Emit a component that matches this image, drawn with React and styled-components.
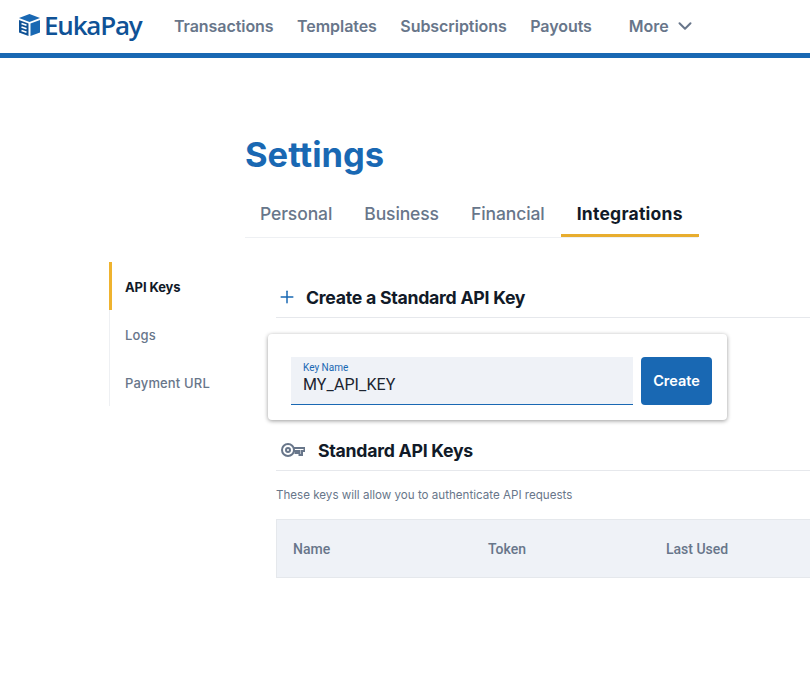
import React from "react";
import styled, { createGlobalStyle } from "styled-components";
import { ChevronDown, Plus } from "lucide-react";

const Global = createGlobalStyle`
  html, body { margin: 0; padding: 0; background: #fff; overflow: hidden; }
  body { font-family: Inter, "Liberation Sans", sans-serif; }
`;

const Header = styled.header`
  height: 53px;
  border-bottom: 5px solid #1968b3;
  display: flex;
  align-items: center;
  padding-left: 19px;
  background: #fff;
`;
const Logo = styled.div`
  display: flex;
  align-items: center;
  gap: 4px;
  width: 155px;
  padding-bottom: 4px;
  color: #0f5296;
`;
const LogoText = styled.span`
  font: 600 26px/1 "Open Sans", sans-serif;
  letter-spacing: -1.2px;
`;
const Nav = styled.nav`
  display: flex;
  align-items: center;
  gap: 23.5px;
  padding-bottom: 2px;
`;
const NavLink = styled.a`
  font-size: 16px;
  font-weight: 600;
  letter-spacing: -0.06px;
  color: #68768a;
  display: flex;
  align-items: center;
  margin-left: ${p => (p.$more ? "13.5px" : "0")};
  gap: 5px;
`;
const Body = styled.div`
  display: flex;
  padding-left: 109px;
`;
const Sidebar = styled.aside`
  width: 135px;
  flex: none;
  margin-top: 204px;
  align-self: flex-start;
  border-left: 1px solid #eef0f3;
`;
const SideItem = styled.div`
  height: 48px;
  box-sizing: border-box;
  display: flex;
  align-items: center;
  padding: 2px 0 0 13px;
  margin-left: -1px;
  border-left: 3px solid ${p => (p.$active ? "#efb32f" : "transparent")};
  font-size: 13px;
  font-weight: ${p => (p.$active ? 700 : 500)};
  letter-spacing: ${p => (p.$active ? "-0.1px" : "0.15px")};
  color: ${p => (p.$active ? "#111a28" : "#68768a")};
`;
const Content = styled.main`
  flex: 1;
  min-width: 0;
`;
const Title = styled.h1`
  margin: 75px 0 0;
  font-size: 34.5px;
  line-height: 44px;
  font-weight: 700;
  color: #1968b3;
`;
const Tabs = styled.div`
  display: flex;
  margin-top: 17px;
  border-bottom: 1px solid #eef0f3;
  width: 453px;
  height: 43px;
`;
const Tab = styled.div`
  padding: 0 16px;
  box-sizing: content-box;
  line-height: 40px;
  font-size: 17.5px;
  font-weight: ${p => (p.$active ? 700 : 500)};
  letter-spacing: ${p => (p.$active ? "0.25px" : "-0.1px")};
  color: ${p => (p.$active ? "#111a28" : "#68768a")};
  border-bottom: ${p => (p.$active ? "3px solid #e8ad2e" : "none")};
  height: ${p => (p.$active ? "40px" : "43px")};
  margin-bottom: -1px;
  &:first-child { margin-left: -1px; }
`;
const Panel = styled.section`
  margin: 39px 0 0 31px;
`;
const SectionHead = styled.div`
  height: 41px;
  box-sizing: border-box;
  display: flex;
  align-items: center;
  padding-left: ${p => p.$inset}px;
  border-bottom: 1px solid #e6e8ec;
  gap: ${p => p.$gap}px;
`;
const SectionTitle = styled.h2`
  margin: 0;
  font-size: 17.7px;
  font-weight: 700;
  letter-spacing: -0.27px;
  color: #111a28;
`;
const Card = styled.div`
  margin: 16px 0 0 -8px;
  width: 459px;
  height: 86px;
  box-sizing: border-box;
  background: #fff;
  border-radius: 4px;
  box-shadow: 0 1px 4px rgba(0,0,0,.4);
  padding: 23px 15px 0 23px;
  display: flex;
  gap: 8px;
`;
const Field = styled.div`
  width: 342px;
  height: 48px;
  box-sizing: border-box;
  background: #eff2f7;
  border-bottom: 1px solid #1968b3;
  padding: 5px 12px 0;
  font-family: Roboto, sans-serif;
`;
const FieldLabel = styled.div`
  font-size: 10px;
  line-height: 11px;
  color: #1968b3;
`;
const FieldValue = styled.div`
  font-size: 16px;
  line-height: 22px;
  margin-top: 1px;
  letter-spacing: 0.1px;
  color: #1b2430;
`;
const Button = styled.button`
  width: 71px;
  height: 48px;
  border: 0;
  border-radius: 4px;
  background: #1968b3;
  color: #fff;
  font: 600 14.5px Inter, sans-serif;
  padding: 0 0 1px;
`;
const Section2 = styled.div`
  margin-top: 10px;
`;
const Description = styled.p`
  margin: 17px 0 0;
  font-size: 11.6px;
  line-height: 14px;
  color: #68768a;
`;
const TableHead = styled.div`
  margin-top: 17px;
  height: 59px;
  box-sizing: border-box;
  display: grid;
  grid-template-columns: 195px 178px 1fr;
  align-items: center;
  padding-left: 16px;
  background: #eff2f7;
  border: 1px solid #e5e8ec;
  border-right: 0;
`;
const HeadCell = styled.div`
  font: 500 14px Roboto, sans-serif;
  color: #68768a;
`;

const CubeIcon = () => (
  <svg width="21" height="22" viewBox="0 0 21 22" fill="none">
    <path d="M10.5 0 21 4 10.5 8 0 4z" fill="#1968b3" />
    <path d="M0 6l9.5 3.5V22L0 18.5z" fill="#0f5296" />
    <path d="M11.5 9.5 21 6v12.5L11.5 22z" fill="#1968b3" />
    <path d="M2.5 9.5l5 1.8M2.5 13l5 1.8M2.5 16.5l5 1.8" stroke="#fff" strokeWidth="1.5" />
  </svg>
);
const KeyIcon = () => (
  <svg width="24" height="14" viewBox="0 0 24 14" fill="none" stroke="#68768a" strokeWidth="2">
    <circle cx="7" cy="7" r="6" />
    <circle cx="7" cy="7" r="2" />
    <path d="M13 5H23.5V8H21V12H18.5V8H16.5V10H14.5V8H13" />
  </svg>
);

export default function App() {
  return (
    <>
      <Global />
      <Header>
        <Logo>
          <CubeIcon />
          <LogoText>EukaPay</LogoText>
        </Logo>
        <Nav>
          <NavLink>Transactions</NavLink>
          <NavLink>Templates</NavLink>
          <NavLink>Subscriptions</NavLink>
          <NavLink>Payouts</NavLink>
          <NavLink $more>More <ChevronDown size={22} strokeWidth={2.2} /></NavLink>
        </Nav>
      </Header>
      <Body>
        <Sidebar>
          <SideItem $active>API Keys</SideItem>
          <SideItem>Logs</SideItem>
          <SideItem>Payment URL</SideItem>
        </Sidebar>
        <Content>
          <Title>Settings</Title>
          <Tabs>
            <Tab>Personal</Tab>
            <Tab>Business</Tab>
            <Tab>Financial</Tab>
            <Tab $active>Integrations</Tab>
          </Tabs>
          <Panel>
            <SectionHead $gap={9} $inset={1}>
              <Plus size={20} color="#1968b3" strokeWidth={1.8} />
              <SectionTitle>Create a Standard API Key</SectionTitle>
            </SectionHead>
            <Card>
              <Field>
                <FieldLabel>Key Name</FieldLabel>
                <FieldValue>MY_API_KEY</FieldValue>
              </Field>
              <Button>Create</Button>
            </Card>
            <Section2>
              <SectionHead $gap={13} $inset={5}>
                <KeyIcon />
                <SectionTitle>Standard API Keys</SectionTitle>
              </SectionHead>
              <Description>These keys will allow you to authenticate API requests</Description>
              <TableHead>
                <HeadCell>Name</HeadCell>
                <HeadCell>Token</HeadCell>
                <HeadCell>Last Used</HeadCell>
              </TableHead>
            </Section2>
          </Panel>
        </Content>
      </Body>
    </>
  );
}
